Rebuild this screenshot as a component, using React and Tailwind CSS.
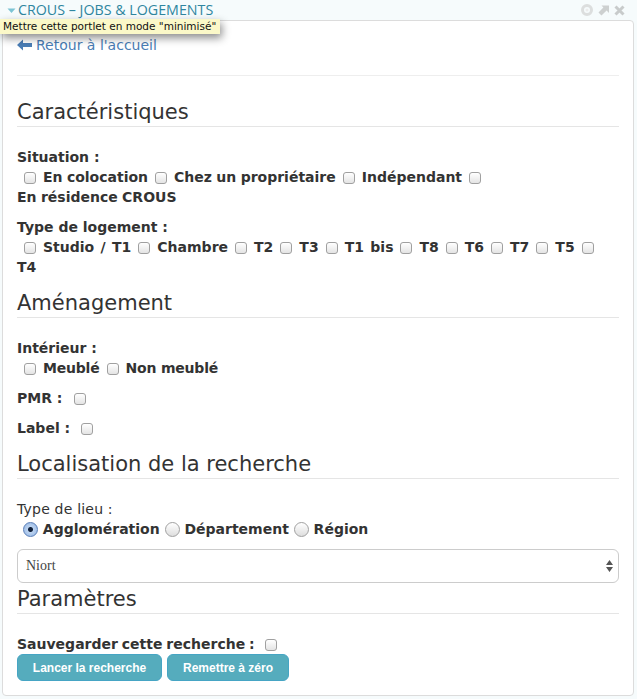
import React from 'react';

const verdana = '[font-family:"DejaVu_Sans",sans-serif]';

function Check({ className = '' }) {
  return (
    <input
      type="checkbox"
      className={`appearance-none inline-block align-[-2px] w-[12px] h-[12px] rounded-[3px] border border-[#a0a0a0] bg-gradient-to-b from-white to-[#e4e4e4] ${className}`}
    />
  );
}

function Radio({ checked = false }) {
  return (
    <input
      type="radio"
      readOnly
      checked={checked}
      className={`appearance-none inline-block align-[-3px] w-[15px] h-[15px] rounded-full border ${
        checked
          ? 'border-[#5a7fb8] bg-[radial-gradient(circle,#10203a_0,#10203a_2px,#bcd3f0_3px,#8fb2e2_100%)]'
          : 'border-[#a0a0a0] bg-gradient-to-b from-white to-[#dedede]'
      }`}
    />
  );
}

function Section({ title, className = '' }) {
  return (
    <h2 className={`text-[21px] leading-[28px] pt-[2px] text-[#333] border-b border-[#e5e5e5] ${className}`}>
      {title}
    </h2>
  );
}

function Options({ items, last, className = '' }) {
  return (
    <div className={`font-bold ${className}`}>
      {items.map((item) => (
        <React.Fragment key={item}>
          <Check className="ml-[7px] mr-[7px]" />
          <span className="whitespace-nowrap">{item}</span>
        </React.Fragment>
      ))}
      {last && (
        <>
          <Check className="ml-[7px]" />
          <div>{last}</div>
        </>
      )}
    </div>
  );
}

export default function App() {
  return (
    <div className={`relative w-[637px] h-[699px] overflow-hidden bg-[#f6fbfc] text-[14px] leading-[20px] text-[#333] ${verdana}`}>
      {/* Portlet title */}
      <div className="h-[20px] flex items-center pl-[7px] pr-[12px]">
        <svg width="9" height="6" viewBox="0 0 9 6" className="mr-[2px] mt-[1px]">
          <path d="M0.5 0.5h8L4.500 5z" fill="#7cc4d4" />
        </svg>
        <span className="flex-1 text-[#2f86a0] text-[14.250px] leading-[20px] [font-family:'Open_Sans',sans-serif]">
          CROUS – JOBS &amp; LOGEMENTS
        </span>
        <div className="flex items-center gap-[5px]">
          <svg width="12" height="12" viewBox="0 0 12 12">
            <circle cx="6" cy="6" r="4.500" fill="none" stroke="#dcdede" strokeWidth="3" />
            <circle cx="6" cy="6" r="1.500" fill="#ececec" />
          </svg>
          <svg width="11" height="11" viewBox="0 0 11 11">
            <path d="M3.500 0.500H11V8L8.600 5.600 3.500 10.500 0.500 7.500 5.400 2.400z" fill="#cdd0d0" />
          </svg>
          <svg width="11" height="11" viewBox="0 0 11 11">
            <path d="M1.500 1.500l8 8M9.500 1.500l-8 8" stroke="#c8cbcb" strokeWidth="3" />
          </svg>
        </div>
      </div>

      {/* Tooltip */}
      <div className="absolute left-0 top-[19px] w-[220px] h-[15px] pl-[3px] bg-[#fbf8c8] text-[#111] text-[10.500px] leading-[15px] whitespace-nowrap shadow-[2px_4px_9px_rgba(0,0,0,0.45)]">
        Mettre cette portlet en mode "minimisé"
      </div>

      {/* Card */}
      <div className="ml-[2px] w-[632px] h-[676px] bg-white border border-[#dcdcdc] rounded-[4px] px-[14px] pt-[14px]">
        <a className="flex items-center gap-[4px] text-[#4a7db5] leading-[20px]">
          <svg width="15" height="12" viewBox="0 0 15 12">
            <path d="M0 6l6-5.500v3.500h9v4H6v3.500z" fill="#4a7db5" />
          </svg>
          Retour à l'accueil
        </a>
        <hr className="mt-[20px] border-[#eeeeee]" />

        <Section title="Caractéristiques" className="mt-[20px]" />
        <div className="mt-[20px] font-bold">Situation :</div>
        <Options
          items={['En colocation', 'Chez un propriétaire', 'Indépendant']}
          last="En résidence CROUS"
          className="[word-spacing:-0.5px]"
        />

        <div className="mt-[10px] font-bold">Type de logement :</div>
        <Options
          items={['Studio / T1', 'Chambre', 'T2', 'T3', 'T1 bis', 'T8', 'T6', 'T7', 'T5']}
          last="T4"
          className="[word-spacing:1.500px]"
        />

        <Section title="Aménagement" className="mt-[10px]" />
        <div className="mt-[20px] font-bold">Intérieur :</div>
        <Options items={['Meublé', 'Non meublé']} className="tracking-[-0.2px]" />
        <div className="mt-[10px] font-bold">PMR :<Check className="ml-[12px]" /></div>
        <div className="mt-[10px] font-bold">Label :<Check className="ml-[11px]" /></div>

        <Section title="Localisation de la recherche" className="mt-[10px]" />
        <div className="mt-[20px] tracking-[0.2px]">Type de lieu :</div>
        <div className="pl-[6px] font-bold">
          <Radio checked /> Agglomération <Radio /> Département <Radio /> Région
        </div>

        <div className="relative mt-[10px] h-[34px]">
          <select className="appearance-none w-full h-[34px] rounded-[6px] border border-[#cccccc] bg-white pl-[8px] text-[14px] text-[#444] [font-family:'Liberation_Serif',serif]">
            <option>Niort</option>
          </select>
          <svg width="7" height="12" viewBox="0 0 7 12" className="absolute right-[6px] top-[11px]">
            <path d="M3.500 0L7 5H0zM3.500 12L0 7h7z" fill="#555" />
          </svg>
        </div>

        <Section title="Paramètres" />
        <div className="mt-[20px] font-bold [word-spacing:-1px]">Sauvegarder cette recherche : <Check className="ml-[6px]" /></div>
        <div className="flex gap-[5px]">
          <button className="w-[145px] h-[27px] rounded-[6px] bg-[#55acbd] border border-[#46a5c4] text-white text-[12px] font-bold [font-family:'Liberation_Sans',sans-serif]">
            Lancer la recherche
          </button>
          <button className="w-[122px] h-[27px] rounded-[6px] bg-[#55acbd] border border-[#46a5c4] text-white text-[12px] font-bold [font-family:'Liberation_Sans',sans-serif]">
            Remettre à zéro
          </button>
        </div>
      </div>
    </div>
  );
}
